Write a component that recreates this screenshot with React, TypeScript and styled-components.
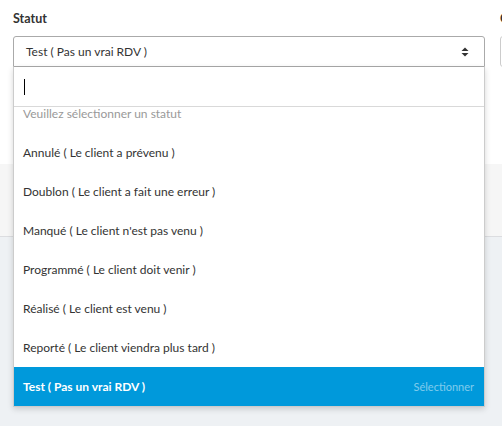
import React from "react";
import styled, { createGlobalStyle } from "styled-components";

const GlobalStyle = createGlobalStyle`
  html, body { margin: 0; padding: 0; }
  body {
    font-family: "Lato", "Open Sans", sans-serif;
    color: #333;
    background: #eef1f4;
  }
  * { box-sizing: border-box; }
`;

const Page = styled.div`
  display: flex;
  flex-direction: column;
  width: 502px;
  height: 426px;
  overflow: hidden;
`;

const FormSection = styled.div`
  background: #fff;
  height: 164px;
  padding: 11px 0 0 13px;
`;

const FieldRow = styled.div`
  display: grid;
  grid-template-columns: 472px 200px;
  column-gap: 15px;
`;

const Field = styled.div<{ $front?: boolean }>`
  display: flex;
  flex-direction: column;
  position: relative;
  z-index: ${(p) => (p.$front ? 2 : 1)};
`;

const Label = styled.label`
  font-size: 12.5px;
  line-height: 16px;
  font-weight: 700;
  color: #333;
  margin-bottom: 9px;
  white-space: nowrap;
`;

const SelectBox = styled.div<{ $open?: boolean }>`
  position: relative;
  height: 31px;
  border: 1px solid ${(p) => (p.$open ? "#aaa" : "#ccc")};
  border-radius: ${(p) => (p.$open ? "3px 3px 0 0" : "3px")};
  background: #fff;
  display: flex;
  align-items: center;
  justify-content: space-between;
  padding: 0 15px 0 12px;
  font-size: 12px;
  color: #333;
`;

const Dropdown = styled.div`
  position: absolute;
  top: calc(100% + 1px);
  left: -1px;
  right: -1px;
  background: #fff;
  border: 1px solid #ccc;
  border-top: none;
  box-shadow: 0 2px 6px rgba(0, 0, 0, 0.16);
`;

const SearchArea = styled.div`
  height: 40px;
  border-bottom: 1px solid #d9d9d9;
  display: flex;
  align-items: center;
  padding-left: 10px;
`;

const Caret = styled.span`
  display: block;
  width: 1px;
  height: 16px;
  background: #000;
`;

const List = styled.ul`
  list-style: none;
  margin: 0;
  padding: 0;
  height: 299px;
  overflow: hidden;
`;

const ListInner = styled.div`
  margin-top: -13px;
`;

const Option = styled.li<{ $active?: boolean; $placeholder?: boolean }>`
  height: 39px;
  display: flex;
  align-items: center;
  justify-content: space-between;
  padding: 0 10px 0 9px;
  font-size: 12px;
  background: ${(p) => (p.$active ? "#0099db" : "transparent")};
  color: ${(p) => (p.$active ? "#fff" : p.$placeholder ? "#999" : "#333")};
  font-weight: ${(p) => (p.$active ? 700 : 400)};
`;

const Hint = styled.span`
  font-size: 11px;
  font-weight: 400;
  color: rgba(255, 255, 255, 0.5);
`;

const GraySection = styled.div`
  height: 73px;
  background: #f6f6f6;
  border-bottom: 1px solid #dcdde0;
`;

const BottomSection = styled.div`
  flex: 1;
  background: #eef1f4;
`;

const SortIcon = () => (
  <svg width="8" height="10" viewBox="0 0 8 10" aria-hidden="true">
    <path d="M0.5 4 L4 0.5 L7.5 4 Z" fill="#333" />
    <path d="M0.5 6 L4 9.5 L7.5 6 Z" fill="#333" />
  </svg>
);

const options = [
  "Annulé ( Le client a prévenu )",
  "Doublon ( Le client a fait une erreur )",
  "Manqué ( Le client n'est pas venu )",
  "Programmé ( Le client doit venir )",
  "Réalisé ( Le client est venu )",
  "Reporté ( Le client viendra plus tard )",
  "Test ( Pas un vrai RDV )",
];

const selected = "Test ( Pas un vrai RDV )";

export default function App() {
  return (
    <>
      <GlobalStyle />
      <Page>
        <FormSection>
          <FieldRow>
            <Field $front>
              <Label>Statut</Label>
              <SelectBox $open>
                <span>{selected}</span>
                <SortIcon />
                <Dropdown>
                  <SearchArea>
                    <Caret />
                  </SearchArea>
                  <List>
                    <ListInner>
                      <Option $placeholder>Veuillez sélectionner un statut</Option>
                      {options.map((o) => (
                        <Option key={o} $active={o === selected}>
                          <span>{o}</span>
                          {o === selected && <Hint>Sélectionner</Hint>}
                        </Option>
                      ))}
                    </ListInner>
                  </List>
                </Dropdown>
              </SelectBox>
            </Field>
            <Field>
              <Label>Commercial</Label>
              <SelectBox />
            </Field>
          </FieldRow>
        </FormSection>
        <GraySection />
        <BottomSection />
      </Page>
    </>
  );
}
